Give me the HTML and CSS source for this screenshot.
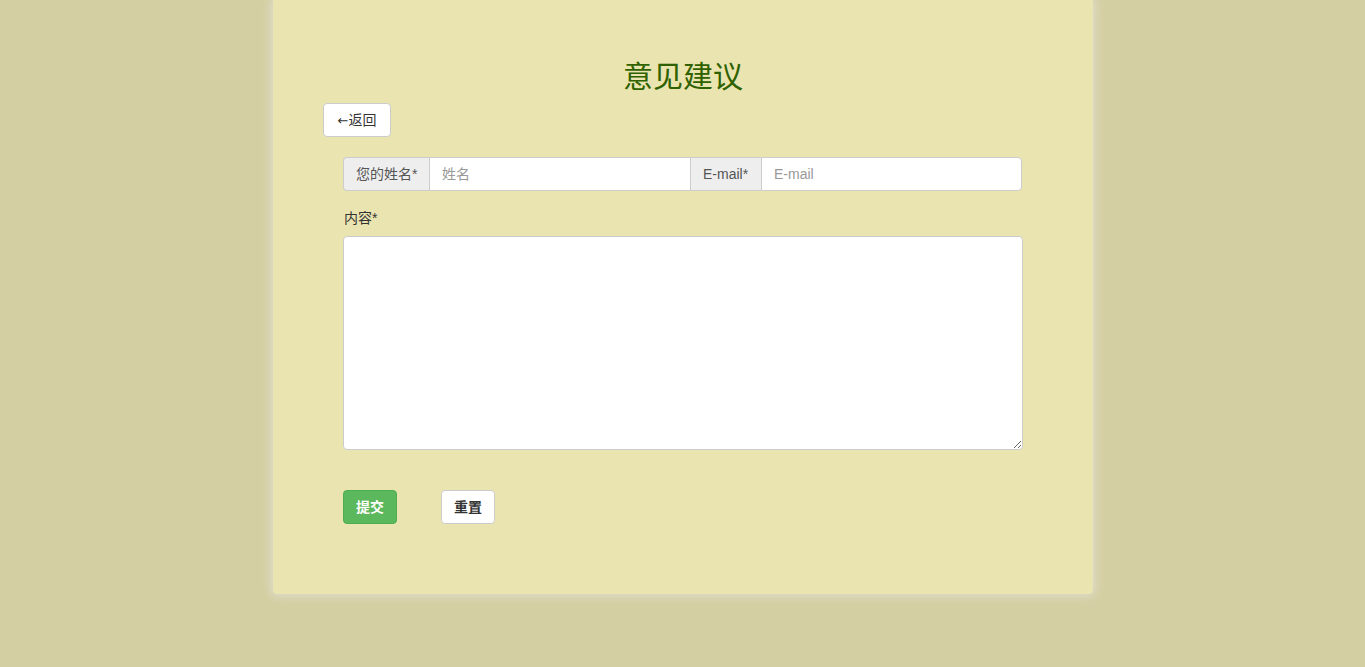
FILE: index.html
```html
<!DOCTYPE html>
<html lang="zh">
<head>
<meta charset="utf-8">
<title>意见建议</title>
<link rel="stylesheet" href="styles.css">
</head>
<body>
<div class="card">
  <h3 class="title">意见建议</h3>
  <button class="btn btn-default back"><span class="arrow">←</span>返回</button>
  <form class="form">
    <div class="input-group">
      <span class="addon addon-name">您的姓名*</span>
      <input class="control control-name" type="text" placeholder="姓名">
      <span class="addon addon-mail">E-mail*</span>
      <input class="control control-mail" type="text" placeholder="E-mail">
    </div>
    <label class="label">内容*</label>
    <textarea class="textarea"></textarea>
    <div class="actions">
      <button type="button" class="btn btn-success">提交</button>
      <button type="button" class="btn btn-default">重置</button>
    </div>
  </form>
</div>
</body>
</html>
```
FILE: styles.css
```css
* { box-sizing: border-box; }
html, body { margin: 0; padding: 0; }
body {
  background: #d4cfa2;
  font-family: "Liberation Sans", Arial, "Noto Sans CJK SC", sans-serif;
  font-size: 14px;
  line-height: 20px;
  color: #333;
  height: 667px;
  overflow: hidden;
}
.card {
  width: 820px;
  margin-left: 273px;
  background: #eae5b0;
  box-shadow: 0 0 10px 2px #e0ddd0;
  padding: 60px 50px 70px;
  display: flex;
  flex-direction: column;
  align-items: flex-start;
  border-radius: 0 0 4px 4px;
}
.title {
  align-self: stretch;
  text-align: center;
  margin: 0 0 10px;
  font-size: 30px;
  line-height: 33px;
  font-weight: normal;
  color: #2f6100;
}
.btn {
  font-family: inherit;
  font-size: 14px;
  line-height: 20px;
  padding: 6px 12px;
  border: 1px solid #ccc;
  border-radius: 4px;
  background: #fff;
  color: #333;
  height: 34px;
  cursor: pointer;
}
.back { padding: 6px 0; width: 68px; white-space: nowrap; text-align: center; }
.arrow { font-family: "DejaVu Sans", sans-serif; font-size: 13px; }
.form {
  width: 679px;
  margin: 20px 0 0 20px;
  display: flex;
  flex-direction: column;
}
.input-group {
  display: flex;
  height: 34px;
}
.addon {
  background: #eee;
  border: 1px solid #ccc;
  padding: 6px 12px;
  color: #555;
  white-space: nowrap;
}
.addon-name { width: 86px; border-radius: 4px 0 0 4px; border-right: 0; }
.addon-mail { width: 71px; border-left: 1px solid #ccc; border-right: 0; }
.control {
  font-family: inherit;
  font-size: 14px;
  border: 1px solid #ccc;
  padding: 6px 12px;
  height: 34px;
  color: #555;
  background: #fff;
  outline: none;
  min-width: 0;
}
.control::placeholder { color: #999; }
.control-name { width: 261px; border-right: 0; }
.control-mail { flex: 1; border-radius: 0 4px 4px 0; }
.label {
  margin: 17px 0 8px 1px;
  font-weight: normal;
  color: #333;
}
.textarea {
  width: 680px;
  height: 214px;
  border: 1px solid #ccc;
  border-radius: 4px;
  background: #fff;
  resize: vertical;
}
.actions {
  display: flex;
  gap: 44px;
  margin-top: 40px;
}
.actions .btn { font-weight: bold; }
.btn-success {
  background: #5cb85c;
  border-color: #4cae4c;
  color: #fff;
}
```
